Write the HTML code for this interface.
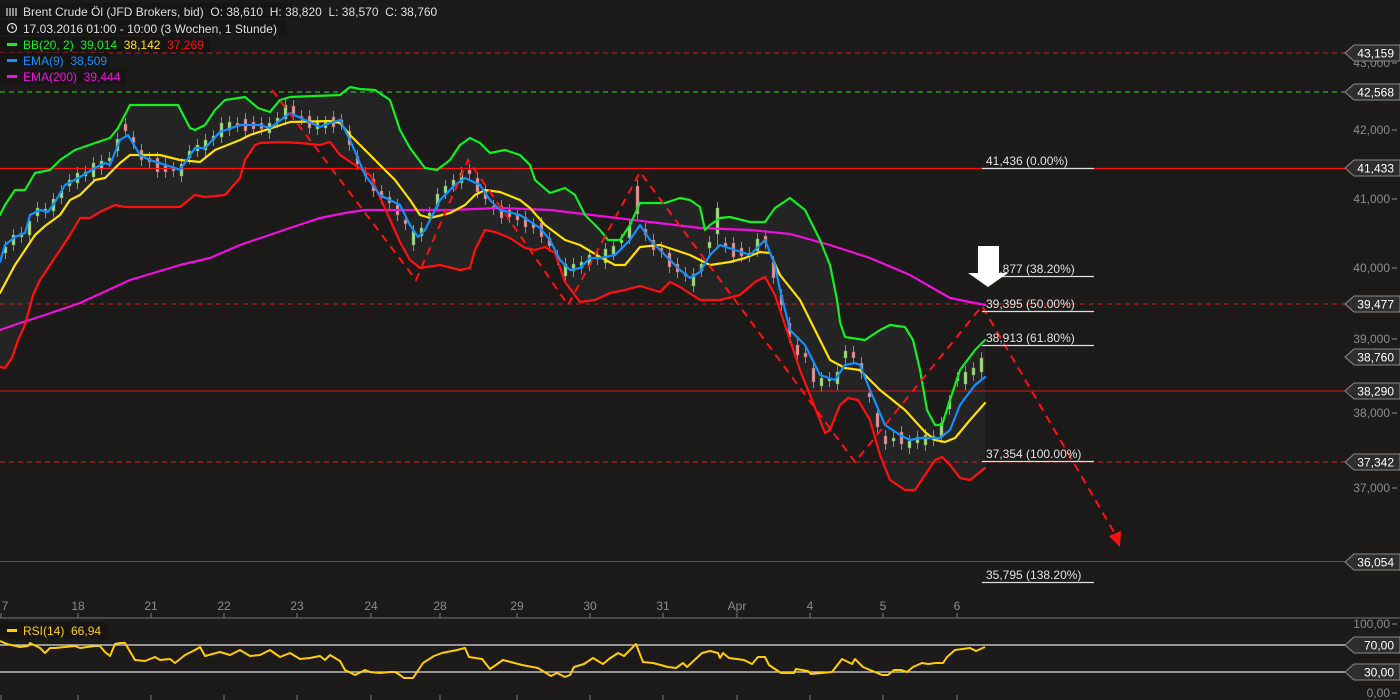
<!DOCTYPE html>
<html><head><meta charset="utf-8"><style>
html,body{margin:0;padding:0;background:#1c1b1a;width:1400px;height:700px;overflow:hidden}
svg{display:block}
text{font-family:"Liberation Sans",sans-serif;white-space:pre}
</style></head><body>
<svg id="s" width="1400" height="700" xmlns="http://www.w3.org/2000/svg">
<rect width="1400" height="700" fill="#1c1b1a"/>
<polygon id="band" fill="#262626" opacity="0.9"/>
<path stroke="#8a8a8a" stroke-width="1" fill="none" d="M5.5 241V259M13.5 229V251M21.5 227V243M29.5 215V241M37.5 202V222M45.5 203V218M53.5 193V217M61.5 185V204M69.5 174V192M77.5 167V189M85.5 166V182M93.5 157V183M101.5 155V175M109.5 152V167M117.5 133V157M125.5 118V137M133.5 131V149M141.5 144V166M149.5 152V168M157.5 152V178M165.5 158V178M173.5 162V177M181.5 158V182M189.5 145V164M197.5 139V157M205.5 134V156M213.5 130V146M221.5 117V143M229.5 116V136M237.5 117V132M245.5 113V137M253.5 116V135M261.5 117V135M269.5 117V139M277.5 112V128M285.5 99V125M293.5 100V120M301.5 110V125M309.5 110V134M317.5 116V135M325.5 116V134M333.5 111V133M341.5 114V130M349.5 125V151M357.5 150V170M365.5 167V182M373.5 173V197M381.5 185V204M389.5 191V209M397.5 199V221M405.5 214V230M413.5 225V251M421.5 222V242M429.5 207V222M437.5 188V212M445.5 180V199M453.5 174V192M461.5 167V189M469.5 164V180M477.5 172V198M485.5 185V205M493.5 200V215M501.5 200V224M509.5 204V223M517.5 208V226M525.5 211V233M533.5 218V234M541.5 217V243M549.5 232V252M557.5 250V265M565.5 258V282M573.5 258V277M581.5 256V274M589.5 249V271M597.5 249V265M605.5 243V269M613.5 240V260M621.5 234V249M629.5 220V244M637.5 180V220M645.5 223V241M653.5 234V256M661.5 242V258M669.5 247V273M677.5 258V278M685.5 267V282M693.5 268V292M701.5 258V277M709.5 236V254M717.5 202V246M725.5 237V253M733.5 237V263M741.5 242V262M749.5 247V262M757.5 233V257M765.5 230V249M773.5 256V284M781.5 289V311M789.5 317V343M797.5 339V361M805.5 347V363M813.5 362V388M821.5 372V392M829.5 372V387M837.5 366V390M845.5 345V364M853.5 346V364M861.5 357V379M869.5 387V403M877.5 407V433M885.5 430V450M893.5 432V447M901.5 426V450M909.5 435V454M917.5 431V449M925.5 429V451M933.5 430V446M941.5 417V443M949.5 395V415M957.5 372V387M965.5 366V390M973.5 362V381M981.5 352V378"/>
<g fill="#a8dd88" stroke="#5a9a40" stroke-width="0.5">
<rect x="4" y="247" width="3" height="6"/><rect x="12" y="235" width="3" height="10"/><rect x="20" y="233" width="3" height="4"/><rect x="28" y="221" width="3" height="14"/><rect x="36" y="208" width="3" height="8"/><rect x="44" y="209" width="3" height="3"/><rect x="52" y="199" width="3" height="12"/><rect x="60" y="191" width="3" height="7"/><rect x="68" y="180" width="3" height="6"/><rect x="76" y="173" width="3" height="10"/><rect x="84" y="172" width="3" height="4"/><rect x="92" y="163" width="3" height="14"/><rect x="100" y="161" width="3" height="8"/><rect x="108" y="158" width="3" height="3"/><rect x="116" y="139" width="3" height="12"/>
<rect x="180" y="164" width="3" height="12"/><rect x="188" y="151" width="3" height="7"/><rect x="196" y="145" width="3" height="6"/><rect x="204" y="140" width="3" height="10"/><rect x="212" y="136" width="3" height="4"/><rect x="220" y="123" width="3" height="14"/><rect x="228" y="122" width="3" height="8"/>
<rect x="268" y="123" width="3" height="10"/><rect x="276" y="118" width="3" height="4"/><rect x="284" y="105" width="3" height="14"/><rect x="316" y="122" width="3" height="7"/><rect x="324" y="122" width="3" height="6"/>
<rect x="412" y="231" width="3" height="14"/><rect x="420" y="228" width="3" height="8"/><rect x="428" y="213" width="3" height="3"/><rect x="436" y="194" width="3" height="12"/><rect x="444" y="186" width="3" height="7"/><rect x="452" y="180" width="3" height="6"/><rect x="460" y="173" width="3" height="10"/>
<rect x="564" y="264" width="3" height="12"/><rect x="572" y="264" width="3" height="7"/><rect x="580" y="262" width="3" height="6"/><rect x="588" y="255" width="3" height="10"/><rect x="596" y="255" width="3" height="4"/><rect x="604" y="249" width="3" height="14"/><rect x="612" y="246" width="3" height="8"/><rect x="620" y="240" width="3" height="3"/><rect x="628" y="226" width="3" height="12"/>
<rect x="692" y="274" width="3" height="12"/><rect x="700" y="264" width="3" height="7"/><rect x="708" y="242" width="3" height="6"/><rect x="716" y="208" width="3" height="26"/><rect x="748" y="253" width="3" height="3"/><rect x="756" y="239" width="3" height="12"/>
<rect x="820" y="378" width="3" height="8"/><rect x="828" y="378" width="3" height="3"/><rect x="836" y="372" width="3" height="12"/><rect x="844" y="351" width="3" height="7"/>
<rect x="892" y="438" width="3" height="3"/><rect x="908" y="441" width="3" height="7"/><rect x="916" y="437" width="3" height="6"/><rect x="924" y="435" width="3" height="10"/><rect x="932" y="436" width="3" height="4"/><rect x="940" y="423" width="3" height="14"/><rect x="948" y="401" width="3" height="8"/><rect x="956" y="378" width="3" height="3"/><rect x="964" y="372" width="3" height="12"/><rect x="972" y="368" width="3" height="7"/><rect x="980" y="358" width="3" height="14"/>
</g>
<g fill="#e39a9a" stroke="#a05050" stroke-width="0.5">
<rect x="124" y="124" width="3" height="7"/><rect x="132" y="137" width="3" height="6"/><rect x="140" y="150" width="3" height="10"/><rect x="148" y="158" width="3" height="4"/><rect x="156" y="158" width="3" height="14"/><rect x="164" y="164" width="3" height="8"/><rect x="172" y="168" width="3" height="3"/>
<rect x="236" y="123" width="3" height="3"/><rect x="244" y="119" width="3" height="12"/><rect x="252" y="122" width="3" height="7"/><rect x="260" y="123" width="3" height="6"/>
<rect x="292" y="106" width="3" height="8"/><rect x="300" y="116" width="3" height="3"/><rect x="308" y="116" width="3" height="12"/><rect x="332" y="117" width="3" height="10"/><rect x="340" y="120" width="3" height="4"/><rect x="348" y="131" width="3" height="14"/><rect x="356" y="156" width="3" height="8"/><rect x="364" y="173" width="3" height="3"/><rect x="372" y="179" width="3" height="12"/><rect x="380" y="191" width="3" height="7"/><rect x="388" y="197" width="3" height="6"/><rect x="396" y="205" width="3" height="10"/><rect x="404" y="220" width="3" height="4"/>
<rect x="468" y="170" width="3" height="4"/><rect x="476" y="178" width="3" height="14"/><rect x="484" y="191" width="3" height="8"/><rect x="492" y="206" width="3" height="3"/><rect x="500" y="206" width="3" height="12"/><rect x="508" y="210" width="3" height="7"/><rect x="516" y="214" width="3" height="6"/><rect x="524" y="217" width="3" height="10"/><rect x="532" y="224" width="3" height="4"/><rect x="540" y="223" width="3" height="14"/><rect x="548" y="238" width="3" height="8"/><rect x="556" y="256" width="3" height="3"/>
<rect x="636" y="186" width="3" height="28"/><rect x="644" y="229" width="3" height="6"/><rect x="652" y="240" width="3" height="10"/><rect x="660" y="248" width="3" height="4"/><rect x="668" y="253" width="3" height="14"/><rect x="676" y="264" width="3" height="8"/><rect x="684" y="273" width="3" height="3"/>
<rect x="724" y="243" width="3" height="4"/><rect x="732" y="243" width="3" height="14"/><rect x="740" y="248" width="3" height="8"/><rect x="764" y="236" width="3" height="7"/><rect x="772" y="262" width="3" height="16"/><rect x="780" y="295" width="3" height="10"/><rect x="788" y="323" width="3" height="14"/><rect x="796" y="345" width="3" height="10"/><rect x="804" y="353" width="3" height="4"/><rect x="812" y="368" width="3" height="14"/>
<rect x="852" y="352" width="3" height="6"/><rect x="860" y="363" width="3" height="10"/><rect x="868" y="393" width="3" height="4"/><rect x="876" y="413" width="3" height="14"/><rect x="884" y="436" width="3" height="8"/><rect x="900" y="432" width="3" height="12"/>
</g>
<line x1="0" y1="53" x2="1345" y2="53" stroke="#d01818" stroke-width="1" stroke-dasharray="5,4"/>
<line x1="0" y1="92" x2="1345" y2="92" stroke="#22dd22" stroke-width="1" stroke-dasharray="5,4"/>
<line x1="0" y1="168.5" x2="1345" y2="168.5" stroke="#ff1010" stroke-width="1.3"/>
<line x1="0" y1="304" x2="1345" y2="304" stroke="#cc1818" stroke-width="1" stroke-dasharray="5,4"/>
<line x1="0" y1="391" x2="1345" y2="391" stroke="#cc1818" stroke-width="1"/>
<line x1="0" y1="462" x2="1345" y2="462" stroke="#dd1818" stroke-width="1" stroke-dasharray="5,4"/>
<line x1="0" y1="561.5" x2="1345" y2="561.5" stroke="#dd1818" stroke-width="1"/>
<g fill="none" stroke-width="2.2" stroke-linejoin="round" stroke-linecap="round">
<polyline id="mag" stroke="#ee10dd"/>
<polyline id="red" stroke="#ff1010"/>
<polyline id="grn" stroke="#11ee22"/>
<polyline id="yel" stroke="#ffe000"/>
<polyline id="blu" stroke="#1090ff"/>
</g>
<polyline points="272,90 416,280 468,160 568,305 640,172 855,462 982,306 1114,532" fill="none" stroke="#ff1010" stroke-width="2" stroke-dasharray="8,6"/>
<polygon points="1120,547 1109,536 1121,531" fill="#ff1010"/>
<g fill="#e0e0e0" font-size="12">
<text x="986" y="165">41,436 (0.00%)</text>
<text x="986" y="273">39,877 (38.20%)</text>
<text x="986" y="308">39,395 (50.00%)</text>
<text x="986" y="342">38,913 (61.80%)</text>
<text x="986" y="458">37,354 (100.00%)</text>
<text x="986" y="579">35,795 (138.20%)</text>
</g>
<g stroke="#dddddd" stroke-width="1.3">
<line x1="982" y1="168.5" x2="1094" y2="168.5"/>
<line x1="982" y1="276.5" x2="1094" y2="276.5"/>
<line x1="982" y1="311.5" x2="1094" y2="311.5"/>
<line x1="982" y1="345.5" x2="1094" y2="345.5"/>
<line x1="982" y1="461.5" x2="1094" y2="461.5"/>
<line x1="982" y1="582.5" x2="1094" y2="582.5"/>
</g>
<polygon points="978,246 999,246 999,273 1008,273 988,287 968,273 978,273" fill="#ffffff"/>
<g fill="#8a8a8a" font-size="12" text-anchor="end">
<text x="1390" y="67">43,000</text>
<text x="1390" y="134">42,000</text>
<text x="1390" y="203">41,000</text>
<text x="1390" y="272">40,000</text>
<text x="1390" y="343">39,000</text>
<text x="1390" y="417">38,000</text>
<text x="1390" y="492">37,000</text>
<text x="1390" y="628">100,00</text>
<text x="1390" y="697">0,00</text>
</g>
<g stroke="#8a8a8a"><line x1="1392" y1="63" x2="1397" y2="63"/><line x1="1392" y1="130" x2="1397" y2="130"/><line x1="1392" y1="199" x2="1397" y2="199"/><line x1="1392" y1="268" x2="1397" y2="268"/><line x1="1392" y1="339" x2="1397" y2="339"/><line x1="1392" y1="413" x2="1397" y2="413"/><line x1="1392" y1="488" x2="1397" y2="488"/><line x1="1392" y1="624" x2="1397" y2="624"/><line x1="1392" y1="693" x2="1397" y2="693"/></g>
<g fill="#2e2e2e" stroke="#888" stroke-width="1">
<polygon points="1345,53 1354,45 1400,45 1400,61 1354,61"/>
<polygon points="1345,92 1354,84 1400,84 1400,100 1354,100"/>
<polygon points="1345,168 1354,160 1400,160 1400,176 1354,176"/>
<polygon points="1345,304 1354,296 1400,296 1400,312 1354,312"/>
<polygon points="1345,357 1354,349 1400,349 1400,365 1354,365"/>
<polygon points="1345,391 1354,383 1400,383 1400,399 1354,399"/>
<polygon points="1345,462 1354,454 1400,454 1400,470 1354,470"/>
<polygon points="1345,562 1354,554 1400,554 1400,570 1354,570"/>
<polygon points="1345,645 1354,637 1400,637 1400,653 1354,653"/>
<polygon points="1345,672 1354,664 1400,664 1400,680 1354,680"/>
</g>
<g fill="#fff" font-size="12" text-anchor="end">
<text x="1394" y="57.5">43,159</text>
<text x="1394" y="96.5">42,568</text>
<text x="1394" y="172.5">41,433</text>
<text x="1394" y="308.5">39,477</text>
<text x="1394" y="361.5">38,760</text>
<text x="1394" y="395.5">38,290</text>
<text x="1394" y="466.5">37,342</text>
<text x="1394" y="566.5">36,054</text>
<text x="1394" y="649.5">70,00</text>
<text x="1394" y="676.5">30,00</text>
</g>
<line x1="0" y1="618" x2="1400" y2="618" stroke="#777" stroke-width="1"/>
<g fill="#8a8a8a" font-size="12" text-anchor="middle">
<text x="5" y="610">7</text><text x="78" y="610">18</text><text x="151" y="610">21</text><text x="224" y="610">22</text><text x="297" y="610">23</text><text x="371" y="610">24</text><text x="440" y="610">28</text><text x="517" y="610">29</text><text x="590" y="610">30</text><text x="663" y="610">31</text><text x="737" y="610">Apr</text><text x="810" y="610">4</text><text x="883" y="610">5</text><text x="957" y="610">6</text>
</g>
<g stroke="#777">
<line x1="1" y1="613" x2="1" y2="618"/><line x1="78" y1="613" x2="78" y2="618"/><line x1="151" y1="613" x2="151" y2="618"/><line x1="224" y1="613" x2="224" y2="618"/><line x1="297" y1="613" x2="297" y2="618"/><line x1="371" y1="613" x2="371" y2="618"/><line x1="440" y1="613" x2="440" y2="618"/><line x1="517" y1="613" x2="517" y2="618"/><line x1="590" y1="613" x2="590" y2="618"/><line x1="663" y1="613" x2="663" y2="618"/><line x1="737" y1="613" x2="737" y2="618"/><line x1="810" y1="613" x2="810" y2="618"/><line x1="883" y1="613" x2="883" y2="618"/><line x1="957" y1="613" x2="957" y2="618"/>
<line x1="1" y1="695" x2="1" y2="700"/><line x1="78" y1="695" x2="78" y2="700"/><line x1="151" y1="695" x2="151" y2="700"/><line x1="224" y1="695" x2="224" y2="700"/><line x1="297" y1="695" x2="297" y2="700"/><line x1="371" y1="695" x2="371" y2="700"/><line x1="440" y1="695" x2="440" y2="700"/><line x1="517" y1="695" x2="517" y2="700"/><line x1="590" y1="695" x2="590" y2="700"/><line x1="663" y1="695" x2="663" y2="700"/><line x1="737" y1="695" x2="737" y2="700"/><line x1="810" y1="695" x2="810" y2="700"/><line x1="883" y1="695" x2="883" y2="700"/><line x1="957" y1="695" x2="957" y2="700"/>
</g>
<rect x="0" y="3" width="292" height="15" fill="#171615"/>
<rect x="0" y="20" width="286" height="15" fill="#171615"/>
<rect x="0" y="37" width="210" height="15" fill="#171615"/>
<rect x="0" y="53" width="110" height="15" fill="#171615"/>
<rect x="0" y="69" width="126" height="15" fill="#171615"/>
<g font-size="12">
<g stroke="#ddd" stroke-width="1.2"><line x1="7" y1="8" x2="7" y2="16"/><line x1="10" y1="8" x2="10" y2="16"/><line x1="13" y1="8" x2="13" y2="16"/><line x1="16" y1="8" x2="16" y2="16"/></g>
<text x="23" y="16" fill="#ddd">Brent Crude Öl (JFD Brokers, bid)  O: 38,610  H: 38,820  L: 38,570  C: 38,760</text>
<circle cx="12" cy="28" r="4.5" fill="none" stroke="#ddd" stroke-width="1.2"/><path d="M12 25.5V28h2" stroke="#ddd" fill="none"/>
<text x="23" y="33" fill="#ddd">17.03.2016 01:00 - 10:00 (3 Wochen, 1 Stunde)</text>
<rect x="7" y="43" width="10" height="3" fill="#11ee22"/>
<text x="23" y="49" fill="#11ee22">BB(20, 2)  39,014  <tspan fill="#ffe000">38,142</tspan>  <tspan fill="#ff1010">37,269</tspan></text>
<rect x="7" y="59" width="10" height="3" fill="#1090ff"/>
<text x="23" y="65" fill="#1090ff">EMA(9)  38,509</text>
<rect x="7" y="75" width="10" height="3" fill="#ee10dd"/>
<text x="23" y="81" fill="#ee10dd">EMA(200)  39,444</text>
</g>
<line x1="0" y1="645" x2="1345" y2="645" stroke="#dddddd" stroke-width="1.3"/>
<line x1="0" y1="672" x2="1345" y2="672" stroke="#dddddd" stroke-width="1.3"/>
<rect x="0" y="622" width="108" height="17" fill="#171615"/>
<rect x="7" y="629" width="10" height="3" fill="#ffcc00"/>
<text x="23" y="635" fill="#ffcc00" font-size="12">RSI(14)  66,94</text>
<polyline id="rsi" fill="none" stroke="#ffcc00" stroke-width="2" stroke-linejoin="round"/>
</svg>
<script>
function P(a){return a.map(function(p){return p[0]+','+p[1];}).join(' ');}
var grn=[[0,215],[5,205],[15,190],[25,190],[35,173],[50,170],[60,160],[75,150],[95,143],[110,138],[118,128],[130,105],[178,105],[190,128],[195,130],[205,125],[215,110],[225,100],[245,97],[258,108],[270,112],[280,100],[290,97],[340,95],[350,87],[360,89],[375,90],[390,100],[400,130],[410,148],[425,168],[437,170],[450,160],[460,145],[470,138],[480,143],[490,153],[505,150],[520,155],[530,165],[535,180],[550,193],[565,188],[575,195],[585,215],[600,230],[608,240],[620,240],[630,225],[640,203],[665,203],[680,198],[690,200],[700,207],[705,230],[710,225],[720,218],[730,217],[750,222],[765,222],[775,208],[790,198],[805,210],[820,240],[830,265],[837,300],[840,322],[845,337],[865,340],[880,330],[890,325],[905,327],[913,340],[920,370],[927,410],[935,425],[942,425],[950,400],[960,370],[975,350],[985,340]];
var red=[[0,367],[5,368],[12,358],[18,340],[25,325],[33,295],[40,280],[50,265],[60,250],[70,235],[80,218],[90,218],[100,212],[115,205],[125,207],[180,207],[195,195],[205,197],[225,195],[240,178],[245,160],[255,145],[260,143],[280,142],[300,143],[320,145],[330,142],[340,155],[370,175],[400,242],[410,260],[420,268],[440,265],[460,270],[470,268],[475,250],[485,230],[495,232],[510,238],[525,248],[535,250],[545,247],[555,253],[565,282],[580,302],[595,300],[610,293],[625,290],[640,286],[660,292],[670,282],[680,287],[700,300],[720,300],[740,295],[755,282],[765,277],[775,295],[780,310],[790,340],[800,370],[810,395],[825,433],[830,430],[840,405],[848,398],[858,400],[870,420],[880,455],[890,480],[905,490],[915,490],[925,475],[935,460],[942,457],[950,465],[960,478],[970,480],[980,472],[985,468]];
var yel=[[0,293],[15,265],[25,250],[35,235],[45,226],[60,215],[70,200],[80,195],[95,180],[105,178],[120,163],[130,155],[160,155],[180,160],[200,162],[215,150],[240,140],[250,135],[290,122],[330,121],[340,123],[350,135],[375,160],[395,180],[410,200],[420,215],[430,218],[450,213],[465,205],[475,195],[485,190],[500,192],[520,200],[530,208],[545,225],[565,240],[580,245],[600,257],[615,265],[625,265],[640,247],[660,245],[690,255],[710,265],[730,262],[745,258],[760,252],[770,253],[780,275],[800,300],[830,360],[845,368],[860,370],[880,390],[905,410],[925,432],[935,440],[945,442],[955,438],[970,420],[985,403]];
var blu=[[0,262],[5,245],[15,237],[25,233],[30,215],[40,210],[48,212],[55,202],[65,185],[80,177],[95,168],[105,163],[110,165],[120,140],[128,135],[140,155],[150,160],[175,168],[180,170],[195,148],[205,148],[220,132],[240,125],[260,125],[270,128],[290,113],[305,120],[320,127],[330,123],[340,120],[350,140],[365,175],[380,195],[400,205],[410,225],[418,237],[425,230],[440,200],[455,185],[465,178],[480,185],[490,200],[500,210],[520,215],[540,228],[550,240],[560,260],[570,270],[580,268],[590,258],[600,258],[615,255],[630,240],[640,225],[650,240],[660,250],[680,270],[690,278],[700,272],[710,255],[720,245],[735,250],[750,255],[765,240],[775,265],[780,290],[790,330],[805,345],[820,375],[835,380],[845,365],[855,363],[860,365],[870,390],[885,425],[900,435],[910,440],[920,438],[940,438],[950,430],[960,405],[975,385],[985,377]];
var mag=[[0,330],[20,323],[45,315],[80,303],[130,280],[180,265],[210,258],[240,245],[290,228],[320,218],[345,213],[365,210],[450,210],[500,208],[550,210],[600,216],[650,222],[700,228],[750,230],[790,234],[830,245],[870,258],[910,275],[950,298],[985,305]];
var rsi=[[0,641],[7,644],[20,647],[28,646],[30,643],[40,648],[45,653],[50,648],[55,648],[65,647],[75,646],[80,648],[95,646],[100,646],[105,652],[110,656],[115,644],[120,643],[125,643],[135,660],[145,661],[150,659],[155,657],[160,660],[170,659],[175,663],[185,655],[195,650],[200,647],[205,656],[220,652],[230,655],[240,650],[250,656],[260,655],[270,650],[280,657],[290,653],[300,659],[310,658],[320,656],[325,660],[330,655],[340,661],[345,670],[355,675],[365,670],[370,672],[380,673],[390,672],[395,672],[400,675],[404,678],[413,678],[423,663],[434,656],[442,653],[457,650],[465,648],[469,657],[482,659],[490,669],[503,660],[522,665],[538,668],[551,676],[557,673],[565,677],[570,675],[574,667],[584,664],[593,658],[603,664],[609,659],[618,653],[624,656],[636,644],[643,662],[653,663],[668,667],[676,668],[683,663],[687,667],[702,653],[710,651],[718,653],[720,658],[723,653],[729,658],[744,660],[752,664],[758,657],[765,657],[769,665],[781,673],[794,673],[796,669],[808,671],[811,674],[832,672],[842,659],[848,662],[852,664],[855,659],[863,667],[882,675],[888,675],[894,670],[901,670],[907,672],[913,667],[922,663],[928,664],[936,663],[943,663],[947,657],[955,650],[970,648],[976,651],[985,647]];
function set(id,a){var e=document.getElementById(id);if(e)e.setAttribute('points',P(a));}
set('grn',grn);set('red',red);set('yel',yel);set('blu',blu);set('mag',mag);set('rsi',rsi);
set('band',grn.concat(red.slice().reverse()));
</script>
</body></html>
